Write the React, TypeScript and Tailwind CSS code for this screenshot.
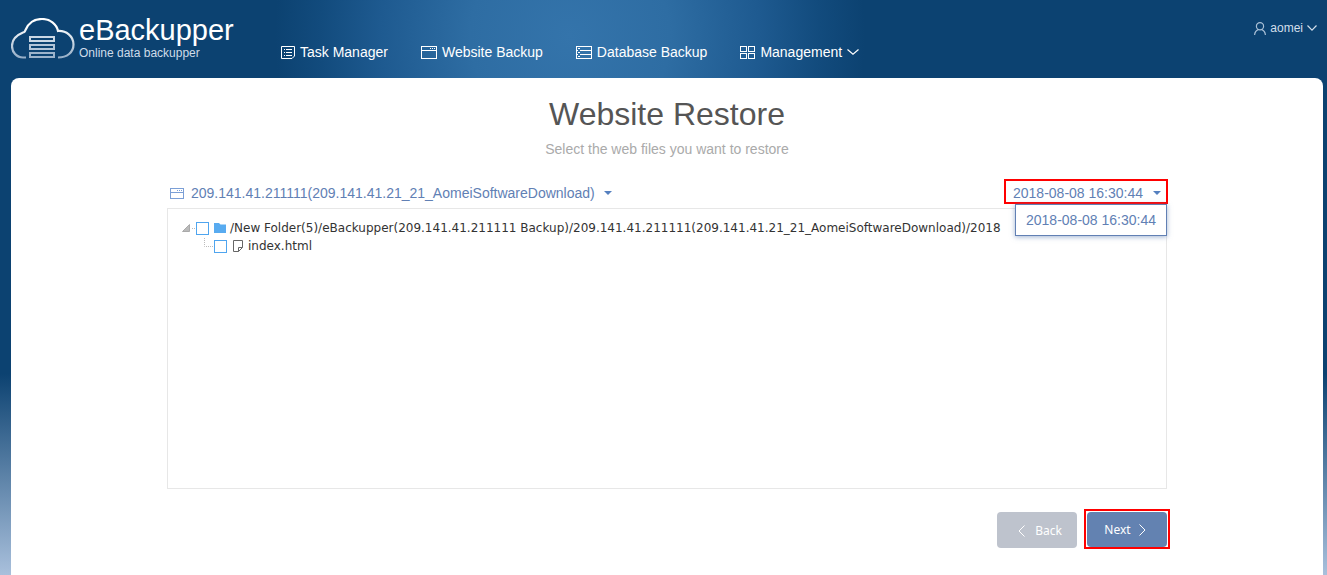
import { type FC, type ReactNode } from "react";

const SITE = "209.141.41.211111(209.141.41.21_21_AomeiSoftwareDownload)";
const RESTORE_POINT = "2018-08-08 16:30:44";

const Logo: FC = () => (
  <svg width="64" height="42" viewBox="0 0 64 42" fill="none" aria-hidden="true">
    <defs>
      <linearGradient id="cloud" x1="0" y1="0" x2="0" y2="42" gradientUnits="userSpaceOnUse">
        <stop offset="0.2" stopColor="#fff" />
        <stop offset="1" stopColor="#8ea8c3" />
      </linearGradient>
    </defs>
    <path
      d="M15 39.5h-3C5.500 39.500 1 34 1 28c0-7 5-11 11-13.500c1.500 0 2-1 2.500-2.500C17.500 5 23 1 31 1s14.500 5 16 12c8-.500 15.500 5 15.500 13.500c0 8-6.500 13-15.500 13"
      stroke="url(#cloud)"
      strokeWidth="2.200"
    />
    <g strokeWidth="2" shapeRendering="crispEdges">
      <path d="M19 19h24v4H19z" stroke="#cbd8e5" />
      <path d="M19 27h24v4H19z" stroke="#b3c5d8" />
      <path d="M19 35h24v4H19z" stroke="#9cb3cb" />
    </g>
  </svg>
);

const TaskIcon: FC = () => (
  <svg width="14" height="13" viewBox="0 0 14 13" fill="none" stroke="#fff" aria-hidden="true">
    <path d="M.5.5h13v9.500l-2.500 2.500H.5z" />
    <path d="M3 3.500h1M5 3.500h6M3 6.500h1M5 6.500h6M3 9.500h1M5 9.500h6" shapeRendering="crispEdges" />
  </svg>
);

const WindowIcon: FC<{ width: number; height: number }> = ({ width, height }) => (
  <svg
    width={width}
    height={height}
    viewBox={`0 0 ${width} ${height}`}
    fill="none"
    stroke="currentColor"
    shapeRendering="crispEdges"
    aria-hidden="true"
  >
    <rect x="0.5" y="0.5" width={width - 1} height={height - 1} />
    <path d={`M1 4.500h${width - 2}M${width - 7} 2.500h1m1 0h1m1 0h1`} />
  </svg>
);

const DatabaseIcon: FC = () => (
  <svg width="16" height="13" viewBox="0 0 16 13" fill="none" stroke="#fff" shapeRendering="crispEdges" aria-hidden="true">
    <path d="M.5.5h15v12H.5zM4 4.500h12M4 8.500h12M2 2.500h2M2 6.500h2M2 10.500h2M1 4.500h1M1 8.500h1" />
  </svg>
);

const GridIcon: FC = () => (
  <svg width="15" height="13" viewBox="0 0 15 13" fill="none" stroke="#fff" shapeRendering="crispEdges" aria-hidden="true">
    <path d="M.5.5h6v5h-6zM8.500.5h6v5h-6zM.5 7.500h6v5h-6zM8.500 7.500h6v5h-6z" />
  </svg>
);

const UserIcon: FC = () => (
  <svg width="12" height="13" viewBox="0 0 12 13" fill="none" stroke="#a9bfd6" strokeWidth="1.200" aria-hidden="true">
    <circle cx="6" cy="4.200" r="3.600" />
    <path d="M.6 13c.2-2.800 1.700-4.700 3.600-5.400M11.400 13c-.2-2.800-1.700-4.700-3.600-5.400" />
  </svg>
);

const ChevronDown: FC<{ size?: number }> = ({ size = 12 }) => (
  <svg width={size} height="6" viewBox={`0 0 ${size} 6`} fill="none" stroke="currentColor" strokeWidth="1.200" aria-hidden="true">
    <path d={`M.5.5l${size / 2 - 0.5} 4.600l${size / 2 - 0.5}-4.600`} />
  </svg>
);

const Caret: FC = () => (
  <svg width="8" height="4" viewBox="0 0 8 4" aria-hidden="true">
    <path d="M0 0h8L4 4z" fill="#5580bf" />
  </svg>
);

const FolderIcon: FC = () => (
  <svg width="12" height="10" viewBox="0 0 12 10" fill="#58abf0" aria-hidden="true">
    <path d="M0 0h5l1.500 1.500H12V10H0z" />
  </svg>
);

const FileIcon: FC = () => (
  <svg width="10" height="12" viewBox="0 0 10 12" fill="none" stroke="#666" aria-hidden="true">
    <path d="M.5.5h9v7l-4 4h-5z" />
    <path d="M5.500 11.500v-4h4" />
  </svg>
);

const NavItem: FC<{ icon: ReactNode; label: string; menu?: boolean }> = ({ icon, label, menu }) => (
  <a href="#" className="flex items-center gap-[5px] whitespace-nowrap text-sm text-white">
    {icon}
    {label}
    {menu && <ChevronDown />}
  </a>
);

const TreeCheckbox: FC<{ id: string }> = ({ id }) => (
  <input
    id={id}
    type="checkbox"
    className="size-[13px] shrink-0 appearance-none border border-[#4fa5ef] bg-white checked:bg-[#4fa5ef]"
  />
);

const Header: FC = () => (
  <header className="flex h-[78px] items-start justify-between bg-[radial-gradient(circle_at_570px_36px,#3474ab_0,#2e6da3_100px,#1e5a90_190px,#124b7d_250px,#0c4271_295px,transparent_295px)] pl-[11px] pr-[10px]">
    <div className="flex">
      <a href="#" className="flex w-[270px] items-start gap-1 pt-[18px] text-white">
        <Logo />
        <div>
          <div className="text-[29px] leading-6">eBackupper</div>
          <div className="mt-[3px] text-xs leading-4 text-[#cfdce9]">Online data backupper</div>
        </div>
      </a>
      <nav className="flex gap-[33px] pt-[42px]">
        <NavItem icon={<TaskIcon />} label="Task Manager" />
        <NavItem icon={<WindowIcon width={16} height={13} />} label="Website Backup" />
        <NavItem icon={<DatabaseIcon />} label="Database Backup" />
        <NavItem icon={<GridIcon />} label="Management" menu />
      </nav>
    </div>
    <button type="button" className="mt-5 flex items-center gap-1 text-xs text-[#d3dfeb]">
      <UserIcon />
      aomei
      <ChevronDown size={10} />
    </button>
  </header>
);

/** File tree of the selected backup */
const FileTree: FC = () => (
  <div className="h-[281px] overflow-hidden border border-[#e7e7e7] pl-3.5 pt-2.5 font-['DejaVu_Sans','Noto_Sans',sans-serif] text-xs leading-[18px] text-[#333]">
    <div className="flex items-center whitespace-nowrap">
      <svg width="14" height="8" viewBox="0 0 14 8" className="shrink-0" aria-hidden="true">
        <path d="M.5 7.500h7v-7z" fill="#bbb" stroke="#aaa" />
        <path d="M10 4.500h4" stroke="#bbb" strokeDasharray="1 1" />
      </svg>
      <TreeCheckbox id="root-folder" />
      <label htmlFor="root-folder" className="flex items-center gap-1 pl-[5px] leading-[18px]">
        <FolderIcon />
        /New Folder(5)/eBackupper(209.141.41.211111 Backup)/{SITE}/2018
      </label>
    </div>
    <div className="flex items-center whitespace-nowrap pl-[22px]">
      <svg width="10" height="18" viewBox="0 0 10 18" className="shrink-0" aria-hidden="true">
        <path d="M.5 1v8.500H10" fill="none" stroke="#bbb" strokeDasharray="1 1" />
      </svg>
      <TreeCheckbox id="index-html" />
      <label htmlFor="index-html" className="flex items-center gap-[5px] pl-1.5">
        <FileIcon />
        index.html
      </label>
    </div>
  </div>
);

export default function App() {
  return (
    <div className="flex min-h-screen flex-col bg-[linear-gradient(#0c4271_65%,#a9c0dc)] font-['Liberation_Sans',Arial,sans-serif]">
      <Header />
      <main className="ml-[11px] mr-1 flex-1 rounded-t-lg bg-white px-4 pb-[26px] pt-4">
        <h1 className="text-center text-[32px] leading-10 text-[#555]">Website Restore</h1>
        <p className="mt-[5px] text-center text-sm text-[#aaa]">Select the web files you want to restore</p>

        <div className="mx-auto mt-5 max-w-[1000px]">
          <div className="flex h-[29px] items-start justify-between text-sm text-[#6180b4]">
            <div className="flex h-7 items-center pl-[3px]">
              <span className="mr-[7px] text-[#7b9fd6]">
                <WindowIcon width={14} height={11} />
              </span>
              <select aria-label="Website" className="appearance-none bg-transparent">
                <option>{SITE}</option>
              </select>
              <span className="ml-[9px]">
                <Caret />
              </span>
            </div>
            <div className="relative -mr-px">
              <button
                type="button"
                aria-haspopup="listbox"
                aria-expanded="true"
                className="flex h-[25px] items-center gap-2.5 border-2 border-[#ff0000] pl-[7px] pr-[5px] pt-0.5"
              >
                {RESTORE_POINT}
                <Caret />
              </button>
              <ul
                role="listbox"
                aria-label="Restore point"
                className="absolute right-px top-full border border-[#6180b4] bg-white shadow-[0_1px_5px_rgba(97,128,180,0.6)]"
              >
                <li role="option" aria-selected="true" className="whitespace-nowrap px-2.5 text-sm leading-[30px]">
                  {RESTORE_POINT}
                </li>
              </ul>
            </div>
          </div>

          <FileTree />

          <div className="mt-5 flex items-start justify-end gap-[7px] font-['Noto_Sans','Noto_Sans_CJK_SC',sans-serif] text-xs text-white">
            <button type="button" className="mt-[3px] flex h-9 w-20 items-center justify-center gap-2.5 rounded bg-[#bec3cd] pl-1.5 pt-0.5">
              <svg width="7" height="12" viewBox="0 0 7 12" fill="none" stroke="currentColor" aria-hidden="true">
                <path d="M6.500.5L1 6l5.500 5.500" />
              </svg>
              Back
            </button>
            <div className="-mr-[3px] border-2 border-[#ff0000] p-px pb-0">
              <button type="button" className="flex h-[35px] w-20 items-center justify-center gap-2 rounded bg-[#6382b1] pr-1">
                Next
                <svg width="7" height="12" viewBox="0 0 7 12" fill="none" stroke="currentColor" aria-hidden="true">
                  <path d="M.5.5L6 6L.5 11.500" />
                </svg>
              </button>
            </div>
          </div>
        </div>
      </main>
    </div>
  );
}
